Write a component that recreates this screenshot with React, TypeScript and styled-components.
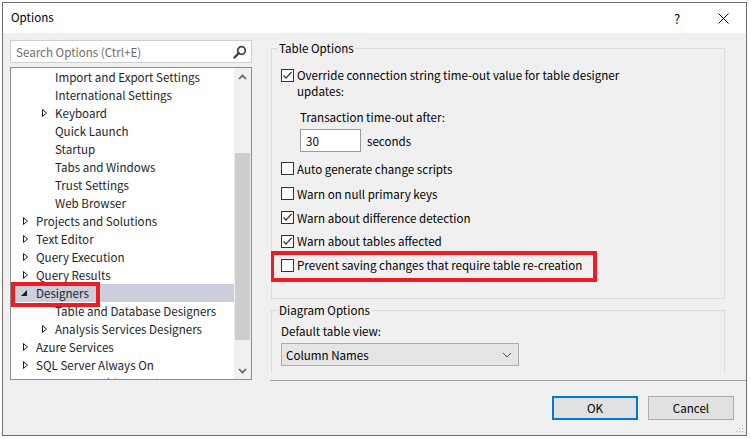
import React from 'react';
import styled, { createGlobalStyle } from 'styled-components';

const Global = createGlobalStyle`
  html, body { margin: 0; padding: 0; background: #ffffff; }
  body {
    font-family: "Noto Sans CJK KR", "Noto Sans", sans-serif;
    font-size: 11.6px;
    color: #000;
  }
  * { box-sizing: border-box; }
`;

const Window = styled.div`
  margin: 2px 0 0 2px;
  width: 745px;
  height: 434px;
  border: 1px solid #6e6e6e;
  background: #f0f0f0;
  display: flex;
  flex-direction: column;
  position: relative;
`;

const TitleBar = styled.div`
  height: 30px;
  background: #ffffff;
  display: flex;
  align-items: center;
  padding-left: 8px;
`;

const Title = styled.div`
  flex: 1;
  font-size: 11.6px;
  line-height: 16px;
  margin-top: -2px;
`;

const TitleButton = styled.div`
  width: 46px;
  height: 30px;
  display: flex;
  align-items: center;
  justify-content: center;
  font-size: 13px;
  color: #000;
`;

const Body = styled.div`
  flex: 1;
  display: flex;
  flex-direction: column;
  padding: 7px 0 0 7px;
`;

const Main = styled.div`
  display: flex;
  gap: 18px;
`;

const LeftColumn = styled.div`
  width: 242px;
  display: flex;
  flex-direction: column;
  gap: 4px;
`;

const SearchBox = styled.div`
  height: 23px;
  border: 1px solid #cfcfcf;
  background: #ffffff;
  display: flex;
  align-items: center;
  padding: 0 4px 0 5px;
`;

const SearchText = styled.div`
  flex: 1;
  color: #6d6d6d;
  line-height: 16px;
`;

const Tree = styled.div`
  height: 313px;
  border: 1px solid #8c8c8c;
  background: #ffffff;
  display: flex;
`;

const TreeList = styled.div`
  flex: 1;
  overflow: hidden;
  display: flex;
  flex-direction: column;
`;

const TreeRow = styled.div<{ $level: number; $selected?: boolean }>`
  flex: 0 0 18px;
  height: 18px;
  display: flex;
  align-items: center;
  padding-left: ${(p) => 9 + p.$level * 19}px;
  background: ${(p) => (p.$selected ? '#cccedb' : 'transparent')};
  color: #1e1e1e;
  line-height: 18px;
  white-space: nowrap;
  position: relative;
`;

const Expander = styled.div`
  width: 16px;
  height: 18px;
  display: flex;
  align-items: center;
`;

const Highlight = styled.div<{ $w: number; $h: number; $l: number; $t: number }>`
  position: absolute;
  left: ${(p) => p.$l}px;
  top: ${(p) => p.$t}px;
  width: ${(p) => p.$w}px;
  height: ${(p) => p.$h}px;
  border: 4px solid #ec1c24;
  pointer-events: none;
`;

const ScrollBar = styled.div`
  width: 17px;
  background: #f0f0f0;
  display: flex;
  flex-direction: column;
`;

const ScrollButton = styled.div`
  height: 17px;
  display: flex;
  align-items: center;
  justify-content: center;
`;

const ScrollTrack = styled.div`
  flex: 1;
  padding: 68px 1px 0 1px;
`;

const Thumb = styled.div`
  height: 187px;
  background: #cdcdcd;
`;

const RightPanel = styled.div`
  flex: 1;
  height: 341px;
  border-bottom: 1px solid #a0a0a0;
  padding: 0 0 7px 1px;
`;

const Viewport = styled.div`
  height: 100%;
  overflow: hidden;
`;

const Group = styled.fieldset<{ $h: number; $gap?: number }>`
  margin: ${(p) => p.$gap ?? 0}px 0 0 0;
  width: 454px;
  height: ${(p) => p.$h}px;
  border: 1px solid #dcdcdc;
  padding: 0 0 0 9px;
  min-width: 0;
`;

const Legend = styled.legend`
  margin-left: -3px;
  padding: 0 1px;
  line-height: 16px;
  font-size: 11.6px;
  color: #000;
`;

const GroupContent = styled.div<{ $top: number }>`
  padding-top: ${(p) => p.$top}px;
  display: flex;
  flex-direction: column;
`;

const CheckRow = styled.div<{ $h?: number }>`
  display: flex;
  align-items: ${(p) => (p.$h ? 'center' : 'flex-start')};
  height: ${(p) => (p.$h ? `${p.$h}px` : 'auto')};
  position: relative;
`;

const Box = styled.div<{ $wrap?: boolean }>`
  width: 13px;
  height: 13px;
  flex: 0 0 13px;
  border: 1px solid #333333;
  background: #ffffff;
  margin-top: ${(p) => (p.$wrap ? '2px' : '0')};
  display: flex;
  align-items: center;
  justify-content: center;
`;

const Label = styled.div`
  margin-left: 3px;
  line-height: 16px;
  color: #000;
  white-space: nowrap;
`;

const SubLabel = styled.div`
  margin: 10px 0 0 19px;
  line-height: 16px;
`;

const TimeoutRow = styled.div`
  margin: 4px 0 0 19px;
  display: flex;
  align-items: center;
  gap: 6px;
`;

const NumberInput = styled.div`
  width: 61px;
  height: 23px;
  border: 1px solid #9a9a9a;
  background: #ffffff;
  padding-left: 5px;
  display: flex;
  align-items: center;
  line-height: 16px;
`;

const Spacer = styled.div<{ $h: number }>`
  height: ${(p) => p.$h}px;
`;

const PlainLabel = styled.div`
  line-height: 16px;
`;

const Select = styled.div`
  margin-top: 4px;
  width: 238px;
  height: 23px;
  border: 1px solid #acacac;
  background: #e5e5e5;
  display: flex;
  align-items: center;
  padding: 0 6px 0 4px;
`;

const SelectText = styled.div`
  flex: 1;
  line-height: 16px;
`;

const Footer = styled.div`
  flex: 1;
  display: flex;
  justify-content: flex-end;
  align-items: flex-start;
  gap: 10px;
  padding: 15px 12px 0 0;
`;

const Button = styled.div<{ $primary?: boolean }>`
  width: 86px;
  height: 24px;
  background: #e1e1e1;
  border: ${(p) => (p.$primary ? '2px solid #0078d7' : '1px solid #adadad')};
  display: flex;
  align-items: center;
  justify-content: center;
  line-height: 16px;
  color: #000;
`;

const Grip = styled.svg`
  position: absolute;
  right: 2px;
  bottom: 2px;
`;

const Check = () => (
  <svg width="11" height="11" viewBox="0 0 11 11">
    <polyline points="1.5,5.5 4,8.2 9.5,2" fill="none" stroke="#333" strokeWidth="1.2" />
  </svg>
);

const Collapsed = () => (
  <svg width="16" height="18" viewBox="0 0 16 18">
    <polygon points="3.5,5.5 7.5,9 3.5,12.5" fill="none" stroke="#1e1e1e" strokeWidth="1" />
  </svg>
);

const Expanded = () => (
  <svg width="16" height="18" viewBox="0 0 16 18">
    <polygon points="7,6 7,12 1,12" fill="#1e1e1e" />
  </svg>
);

type Item = { text: string; level: number; exp?: 'c' | 'e'; selected?: boolean; mark?: boolean };

const items: Item[] = [
  { text: 'Import and Export Settings', level: 1 },
  { text: 'International Settings', level: 1 },
  { text: 'Keyboard', level: 1, exp: 'c' },
  { text: 'Quick Launch', level: 1 },
  { text: 'Startup', level: 1 },
  { text: 'Tabs and Windows', level: 1 },
  { text: 'Trust Settings', level: 1 },
  { text: 'Web Browser', level: 1 },
  { text: 'Projects and Solutions', level: 0, exp: 'c' },
  { text: 'Text Editor', level: 0, exp: 'c' },
  { text: 'Query Execution', level: 0, exp: 'c' },
  { text: 'Query Results', level: 0, exp: 'c' },
  { text: 'Designers', level: 0, exp: 'e', selected: true, mark: true },
  { text: 'Table and Database Designers', level: 1 },
  { text: 'Analysis Services Designers', level: 1, exp: 'c' },
  { text: 'Azure Services', level: 0, exp: 'c' },
  { text: 'SQL Server Always On', level: 0, exp: 'c' },
  { text: 'SQL Server Object Explorer', level: 0, exp: 'c' },
];

const checks: { text: string; checked: boolean; h: number; mark?: boolean }[] = [
  { text: 'Auto generate change scripts', checked: false, h: 25 },
  { text: 'Warn on null primary keys', checked: false, h: 25 },
  { text: 'Warn about difference detection', checked: true, h: 23 },
  { text: 'Warn about tables affected', checked: true, h: 24 },
  { text: 'Prevent saving changes that require table re-creation', checked: false, h: 24, mark: true },
];

export default function App() {
  return (
    <>
      <Global />
      <Window>
        <TitleBar>
          <Title>Options</Title>
          <TitleButton>?</TitleButton>
          <TitleButton>
            <svg width="11" height="11" viewBox="0 0 11 11">
              <path d="M0.5 0.5 L10.5 10.5 M10.5 0.5 L0.5 10.5" stroke="#000" strokeWidth="1" />
            </svg>
          </TitleButton>
        </TitleBar>
        <Body>
          <Main>
            <LeftColumn>
              <SearchBox>
                <SearchText>Search Options (Ctrl+E)</SearchText>
                <svg width="14" height="14" viewBox="0 0 14 14">
                  <circle cx="8.5" cy="5.5" r="3.8" fill="none" stroke="#424242" strokeWidth="1.8" />
                  <path d="M5.8 8.2 L1.5 12.5" stroke="#424242" strokeWidth="2.4" strokeLinecap="round" />
                </svg>
              </SearchBox>
              <Tree>
                <TreeList>
                  {items.map((it) => (
                    <TreeRow key={it.text} $level={it.level} $selected={it.selected}>
                      <Expander>
                        {it.exp === 'c' ? <Collapsed /> : it.exp === 'e' ? <Expanded /> : null}
                      </Expander>
                      {it.text}
                      {it.mark && <Highlight $l={0} $t={-2} $w={89} $h={25} />}
                    </TreeRow>
                  ))}
                </TreeList>
                <ScrollBar>
                  <ScrollButton>
                    <svg width="9" height="6" viewBox="0 0 9 6">
                      <polyline points="1,5 4.5,1.5 8,5" fill="none" stroke="#606060" strokeWidth="1.6" />
                    </svg>
                  </ScrollButton>
                  <ScrollTrack>
                    <Thumb />
                  </ScrollTrack>
                  <ScrollButton>
                    <svg width="9" height="6" viewBox="0 0 9 6">
                      <polyline points="1,1 4.5,4.5 8,1" fill="none" stroke="#606060" strokeWidth="1.6" />
                    </svg>
                  </ScrollButton>
                </ScrollBar>
              </Tree>
            </LeftColumn>
            <RightPanel>
              <Viewport>
                <Group $h={259}>
                  <Legend>Table Options</Legend>
                  <GroupContent $top={11}>
                    <CheckRow>
                      <Box $wrap>
                        <Check />
                      </Box>
                      <Label>
                        Override connection string time-out value for table designer
                        <br />
                        updates:
                      </Label>
                    </CheckRow>
                    <SubLabel>Transaction time-out after:</SubLabel>
                    <TimeoutRow>
                      <NumberInput>30</NumberInput>
                      seconds
                    </TimeoutRow>
                    <Spacer $h={4} />
                    {checks.map((c) => (
                      <CheckRow key={c.text} $h={c.h}>
                        <Box>{c.checked && <Check />}</Box>
                        <Label>{c.text}</Label>
                        {c.mark && <Highlight $l={-11} $t={-2} $w={327} $h={31} />}
                      </CheckRow>
                    ))}
                  </GroupContent>
                </Group>
                <Group $h={120} $gap={3}>
                  <Legend>Diagram Options</Legend>
                  <GroupContent $top={5}>
                    <PlainLabel>Default table view:</PlainLabel>
                    <Select>
                      <SelectText>Column Names</SelectText>
                      <svg width="10" height="6" viewBox="0 0 10 6">
                        <polyline points="1,1 5,5 9,1" fill="none" stroke="#555" strokeWidth="1" />
                      </svg>
                    </Select>
                  </GroupContent>
                </Group>
              </Viewport>
            </RightPanel>
          </Main>
          <Footer>
            <Button $primary>OK</Button>
            <Button>Cancel</Button>
          </Footer>
        </Body>
        <Grip width="8" height="8" viewBox="0 0 8 8">
          <rect x="6" y="0" width="1" height="1" fill="#b5b5b5" />
          <rect x="3" y="3" width="1" height="1" fill="#b5b5b5" />
          <rect x="6" y="3" width="1" height="1" fill="#b5b5b5" />
          <rect x="0" y="6" width="1" height="1" fill="#b5b5b5" />
          <rect x="3" y="6" width="1" height="1" fill="#b5b5b5" />
          <rect x="6" y="6" width="1" height="1" fill="#b5b5b5" />
        </Grip>
      </Window>
    </>
  );
}
